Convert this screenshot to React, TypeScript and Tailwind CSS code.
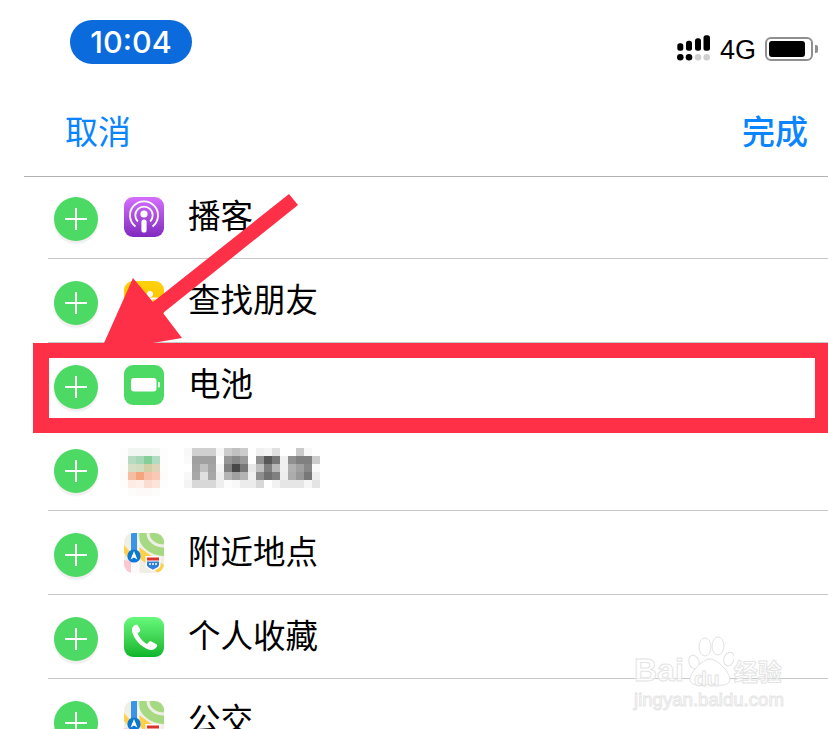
const cjk = { fontFamily: '"Noto Sans CJK SC", sans-serif' };

// Blurred row: grey values from the mosaic, 8px cells
const mosaicText = [
  [0xf8, 0xd0, 0xd0, 0xd0, 0xf6, 0xcc, 0xc0, 0xcc, 0xff, 0xf0, 0xf4, 0xe0, 0xff, 0xff, 0xca, 0xf8, 0xff],
  [0xfa, 0xa0, 0xa0, 0xa0, 0xfd, 0x96, 0x88, 0x9a, 0xff, 0x90, 0x58, 0x78, 0xf0, 0x90, 0x80, 0x80, 0xcc],
  [0xff, 0xa4, 0xc0, 0xa4, 0xf4, 0x80, 0x48, 0x78, 0xe8, 0xc0, 0x80, 0xb8, 0xf0, 0xb0, 0xa0, 0x88, 0xfa],
  [0xf8, 0xa8, 0xe0, 0xa8, 0xee, 0xb4, 0xa0, 0xb4, 0xf0, 0x8e, 0x70, 0x80, 0xee, 0xac, 0x98, 0x78, 0xee],
  [0xf4, 0xd8, 0xd8, 0xd8, 0xee, 0xfc, 0xf8, 0xec, 0xec, 0xd8, 0xff, 0xf2, 0xe6, 0xe6, 0xe6, 0xf6, 0xe4],
];

const mosaicIcon = [
  ['#fcfdfc', '#f1f6f2', '#f1f6f2', '#f1f6f2', '#f3f8f4', '#fdfdfd'],
  ['#fcfdfc', '#b5dcc0', '#a6d7b6', '#86ce99', '#b0dcc0', '#fcfdfc'],
  ['#fcfcfa', '#d6dfc6', '#d4dcc0', '#d2cfa6', '#e0d4b8', '#fdfdfb'],
  ['#fdfbfa', '#f6bda2', '#f5a57e', '#f8c0a8', '#fac9b6', '#fefcfb'],
  ['#fefdfc', '#fdebe4', '#fdf0ea', '#fcdcd0', '#fde4da', '#fefdfd'],
  ['#ffffff', '#fefcfb', '#fdf9f8', '#fdf9f8', '#fefcfb', '#ffffff'],
];

const PlusButton = () => (
  <div className="flex h-[44px] w-[44px] shrink-0 items-center justify-center rounded-full bg-[#4cd964] shadow-[0_3px_2px_rgba(0,0,0,0.07)]">
    <svg width="22" height="22" viewBox="0 0 22 22" fill="none" stroke="#fff" strokeWidth="2">
      <path d="M0 11h22M11 0v22" />
    </svg>
  </div>
);

const PodcastIcon = () => (
  <div className="h-[40px] w-[40px] overflow-hidden rounded-[9px] bg-linear-to-b from-[#d66efd] to-[#8129bf]">
    <svg width="40" height="40" viewBox="0 0 40 40" fill="none" stroke="#fff" strokeWidth="1.8">
      <path d="M11.5 29.5a14 14 0 1 1 17 0" />
      <path d="M13.8 24.5a8.7 8.7 0 1 1 12.4 0" />
      <circle cx="20" cy="17" r="3.6" fill="#fff" stroke="none" />
      <rect x="17.4" y="22.5" width="5.2" height="13" rx="2.6" fill="#fff" stroke="none" />
    </svg>
  </div>
);

const FriendsIcon = () => (
  <div className="h-[40px] w-[40px] overflow-hidden rounded-[9px] bg-linear-to-b from-[#ffd20a] to-[#ffb400]">
    <svg width="40" height="40" viewBox="0 0 40 40" fill="#fff">
      <circle cx="26" cy="13" r="3" />
      <path d="M18 16.5h16v2h-5.500v10h-5v-10H18z" />
    </svg>
  </div>
);

const BatteryIcon = () => (
  <div className="h-[40px] w-[40px] overflow-hidden rounded-[9px] bg-[#4cd964]">
    <svg width="40" height="40" viewBox="0 0 40 40" fill="#fff">
      <rect x="7" y="13" width="25.5" height="13.5" rx="3" />
      <path d="M34 17h1a1 1 0 0 1 1 1v3.500a1 1 0 0 1-1 1h-1z" opacity="0.85" />
    </svg>
  </div>
);

const MosaicIcon = () => (
  <svg width="48" height="48" viewBox="0 0 48 48" className="-mx-[4px] -mt-[1px] shrink-0">
    {mosaicIcon.map((row, y) =>
      row.map((color, x) => <rect key={`${x}-${y}`} x={x * 8} y={y * 8} width="8" height="8" fill={color} />),
    )}
  </svg>
);

const MapIcon = () => (
  <div className="h-[40px] w-[40px] overflow-hidden rounded-[9px] bg-[#f1eee5]">
    <svg width="40" height="40" viewBox="0 0 40 40" fill="none">
      <path d="M14 0h26v23C28 23 14 14 14 0z" fill="#a5d982" />
      <path d="M24 0c0 8 8 13 16 13" stroke="#f1eee5" strokeWidth="3" />
      <path d="M15 14l25 18v8h-6L15 25z" fill="#fdd04c" />
      <path d="M0 12l7 8v8L0 20z" fill="#fdd04c" />
      <path d="M0 27l7 1v12H0z" fill="#fbc7d0" />
      <rect x="7" y="28" width="8" height="12" fill="#fafafa" />
      <rect x="7" y="0" width="6" height="24" fill="#3a95e6" />
      <rect x="14.500" y="0" width="0.8" height="40" fill="#fff" />
      <circle cx="10" cy="23" r="6.6" fill="#0b78d8" />
      <path d="M10 18l3.400 8.400-3.400-1.800-3.400 1.800z" fill="#fff" />
      <path d="M21.500 23h15v9c0 3-4 4.500-7.500 6.500-3.500-2-7.500-3.500-7.500-6.500z" fill="#fff" />
      <path d="M23 24.500h12v3H23z" fill="#d9342f" />
      <path d="M23 28.500h12v3.500c0 2-3 3-6 4.700-3-1.700-6-2.700-6-4.700z" fill="#2f7fd8" />
      <path d="M25 31h8" stroke="#fff" strokeWidth="1.600" strokeDasharray="2 1" />
    </svg>
  </div>
);

const PhoneIcon = () => (
  <div className="h-[40px] w-[40px] overflow-hidden rounded-[9px] bg-linear-to-b from-[#66f97b] to-[#08b52a]">
    <svg width="40" height="40" viewBox="0 0 40 40" fill="#fff">
      <path d="M11 8C9 9 7.500 11 8 14c1.500 8 9 16.500 18 19 3 .5 5.500-1 7-3.500.5-1 0-2-1-2.500l-4.500-2.500c-1-.5-2-.3-2.700.5L23 27c-4-2-8-7-9.500-10.500l2-1.700c.8-.8 1-1.800.5-2.800L13.500 8c-.5-.5-1.500-.5-2.500 0z" />
    </svg>
  </div>
);

const BlurredName = () => (
  <svg width="136" height="40" viewBox="0 0 136 40" className="-mt-[1px] -ml-[4px]">
    {mosaicText.map((row, y) =>
      row.map((v, x) => <rect key={`${x}-${y}`} x={x * 8} y={y * 8} width="8" height="8" fill={`rgb(${v},${v},${v})`} />),
    )}
  </svg>
);

const rows = [
  { icon: <PodcastIcon />, label: '播客' },
  { icon: <FriendsIcon />, label: '查找朋友' },
  { icon: <BatteryIcon />, label: '电池' },
  { icon: <MosaicIcon />, label: null },
  { icon: <MapIcon />, label: '附近地点' },
  { icon: <PhoneIcon />, label: '个人收藏' },
  { icon: <MapIcon />, label: '公交' },
];

const StatusIcons = () => (
  <div className="mt-[15px] flex items-start">
    <svg width="34" height="26" viewBox="0 0 34 26">
      <rect x="0.300" y="8.300" width="6" height="7.500" rx="2.500" />
      <rect x="9" y="5.700" width="6" height="10" rx="2.500" />
      <rect x="18" y="3.300" width="6" height="12.500" rx="2.500" />
      <rect x="26.500" y="0.300" width="6.500" height="15.500" rx="2.500" />
      <circle cx="3.300" cy="22.300" r="3.300" />
      <circle cx="12" cy="22.300" r="3.300" />
      <circle cx="21" cy="22.300" r="3.300" fill="#cfcfcf" />
      <circle cx="29.700" cy="22.300" r="3.300" fill="#cfcfcf" />
    </svg>
    <span
      className="ml-[9px] text-[27px] leading-[30px] text-black"
      style={{ fontFamily: '"Liberation Sans", sans-serif' }}
    >
      4G
    </span>
    <div className="mt-[2px] ml-[9px] flex items-center">
      <div className="flex h-[24px] w-[48px] items-center rounded-[6px] border-2 border-[#8f8f8f] p-[2px]">
        <div className="h-[16px] w-[36px] rounded-[3px] bg-black" />
      </div>
      <div className="ml-[2px] h-[8px] w-[3px] rounded-r-[2px] bg-[#8f8f8f]" />
    </div>
  </div>
);

// Faint Baidu watermark, bottom right
const Watermark = () => (
  <div className="pointer-events-none absolute top-[635px] left-[634px] w-[160px] text-white/70">
    <div className="relative flex h-[52px] items-end">
      <span
        className="text-[32px] leading-[34px] font-bold [-webkit-text-stroke:1px_#e4e4e4]"
        style={{ fontFamily: '"Liberation Sans", sans-serif' }}
      >
        Bai
      </span>
      <svg width="48" height="52" viewBox="0 0 48 52" fill="#ffffff" stroke="#e2e2e2" strokeWidth="1" className="ml-[2px] shrink-0">
        <ellipse cx="8" cy="27" rx="5" ry="7" transform="rotate(-20 8 27)" />
        <ellipse cx="19" cy="12" rx="6" ry="9" />
        <ellipse cx="32" cy="11" rx="6" ry="9" />
        <ellipse cx="43" cy="24" rx="5" ry="7" transform="rotate(20 43 24)" />
        <path d="M24 24c8 0 20 14 20 20 0 5-6 7-12 6-5-1-11-1-16 0-6 1-12-1-12-6 0-6 12-20 20-20z" />
      </svg>
      <span
        className="absolute top-[32px] left-[60px] text-[21px] leading-[24px] font-bold [-webkit-text-stroke:1px_#e4e4e4]"
        style={{ fontFamily: '"Liberation Sans", sans-serif' }}
      >
        du
      </span>
      <span className="mb-[1px] text-[24px] leading-[30px] font-bold [-webkit-text-stroke:1px_#e4e4e4]" style={cjk}>
        经验
      </span>
    </div>
    <div
      className="mt-[3px] text-[18.600px] leading-[20px] whitespace-nowrap [-webkit-text-stroke:1px_#e6e6e6]"
      style={{ fontFamily: '"Liberation Sans", sans-serif' }}
    >
      jingyan.baidu.com
    </div>
  </div>
);

export default function App() {
  return (
    <div className="relative h-[729px] w-[828px] overflow-hidden bg-white" style={cjk}>
      {/* Status bar and nav */}
      <header className="ml-[24px] h-[177px] border-b border-[#b2b2b2]">
        <div className="flex items-start justify-between pt-[20px] pr-[10px] pl-[46px]">
          <div
            className="flex h-[44px] w-[122px] items-center justify-center rounded-[22px] bg-[#0b6bdc] text-[30.500px] font-medium text-white"
            style={{ fontFamily: 'Inter, sans-serif' }}
          >
            10:04
          </div>
          <StatusIcons />
        </div>
        <div className="mt-[45px] flex items-center justify-between pr-[20px] pl-[41px] text-[33px] leading-[40px] text-[#0a84ff]">
          <span>取消</span>
          <span className="font-medium">完成</span>
        </div>
      </header>

      {/* List */}
      <ul className="ml-[48px]">
        {rows.map((row, i) => (
          <li
            key={i}
            className="flex h-[84px] items-start border-b border-[#c8c8c8] pt-[22px] pl-[6px] first:h-[82px] first:pt-[20px]"
          >
            <PlusButton />
            <div className="ml-[26px] flex w-[40px] shrink-0 justify-center">{row.icon}</div>
            <div className="ml-[24px] text-[32.500px] leading-[34px] whitespace-nowrap text-black">
              {row.label ?? <BlurredName />}
            </div>
          </li>
        ))}
      </ul>

      <Watermark />

      {/* Annotation: red frame and arrow */}
      <div className="absolute top-[343px] left-[33px] h-[90px] w-[795px] border-[15px] border-r-[13px] border-l-[16px] border-[#fe3048]" />
      <svg className="absolute top-0 left-0" width="828" height="729" viewBox="0 0 828 729">
        <polygon points="289,194 298,205 163,313 182,338 100,352 133,278 153,302" fill="#fe3048" />
      </svg>
    </div>
  );
}
